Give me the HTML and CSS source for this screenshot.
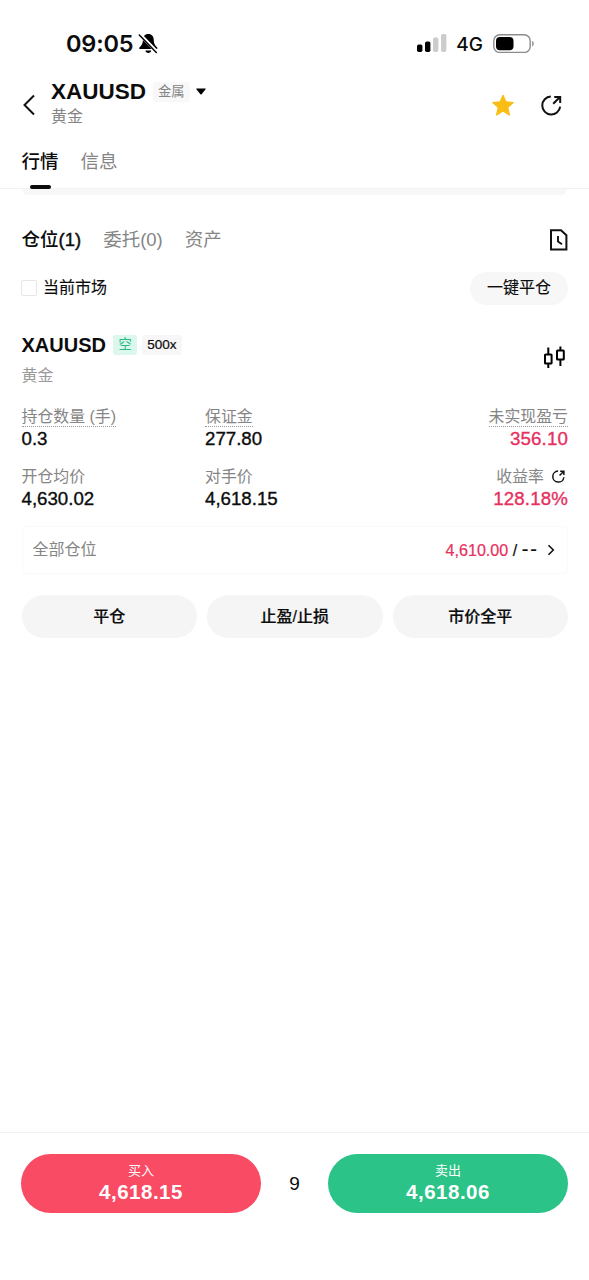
FILE: index.html
```html
<!DOCTYPE html>
<html lang="zh-CN">
<head>
<meta charset="utf-8">
<title>XAUUSD 黄金</title>
<link rel="stylesheet" href="styles.css">
</head>
<body>
<div class="screen">
  <div class="status">
    <span class="clock">09:05</span>
    <svg class="bell" width="21" height="22" viewBox="0 0 21 22">
      <path d="M10.3 1c-3.6 0-5.400 2.600-5.400 5.700 0 3.800-1 5.300-3.300 7.500-.8.800-.4 1.900.7 1.900h16c1.100 0 1.500-1.100.7-1.900-2.300-2.200-3.300-3.700-3.300-7.500C15.700 3.600 13.900 1 10.300 1z" fill="#000"/>
      <path d="M7.300 17.500h6c-.3 1.600-1.400 2.500-3 2.500s-2.700-.9-3-2.500z" fill="#000"/>
      <path d="M2.200 1.800l17 17.500" stroke="#fff" stroke-width="3.400"/>
      <path d="M1.300 2l17 17.500" stroke="#000" stroke-width="1.500" stroke-linecap="round"/>
    </svg>
    <svg class="signal" width="30" height="20" viewBox="0 0 30 20">
      <rect x="0" y="11.500" width="5.400" height="7.500" rx="1.700"/>
      <rect x="8" y="8.500" width="5.400" height="10.500" rx="1.700"/>
      <rect x="16" y="4.500" width="5.400" height="14.500" rx="1.700" fill="#ccc"/>
      <rect x="24" y="1" width="5.400" height="18" rx="1.700" fill="#ccc"/>
    </svg>
    <span class="network">4G</span>
    <svg class="battery" width="42" height="20" viewBox="0 0 42 20">
      <rect x=".8" y=".8" width="36.400" height="17.600" rx="6" fill="none" stroke="#8c8c8c" stroke-width="1.400"/>
      <rect x="3" y="3" width="17.500" height="13.300" rx="4" fill="#000"/>
      <path d="M39.200 6.800c2 .7 2 5 0 5.700z" fill="#8c8c8c"/>
    </svg>
  </div>

  <header class="header">
    <svg class="back" width="13" height="22" viewBox="0 0 13 22"><path d="M12 1.500L2.500 11l9.500 9.500" fill="none" stroke="#111" stroke-width="2"/></svg>
    <div class="instrument">
      <div class="instrument-top">
        <span class="symbol">XAUUSD</span>
        <span class="category">金属</span>
        <svg width="10" height="7" viewBox="0 0 10 7"><path d="M.8.400h8.400c.5 0 .7.500.4.900L5.600 6.200c-.3.400-.9.400-1.200 0L.4 1.300C.1.900.3.400.8.400z"/></svg>
      </div>
      <div class="instrument-name">黄金</div>
    </div>
    <svg class="star" width="24" height="23" viewBox="0 0 24 23"><path d="M12 1l3 6.800 7.600.7-5.700 5.100 1.700 7.700L12 17.200l-6.600 4.100 1.700-7.700L1.400 8.500 9 7.800z" fill="#fabd14" stroke="#fabd14" stroke-width="1" stroke-linejoin="round"/></svg>
    <svg class="share" width="21" height="21" viewBox="0 0 21 21"><g fill="none" stroke="#111" stroke-width="2"><path d="M9.800 1.500a9 9 0 1 0 9.400 10.200M12.200 8.800l6.500-6.500M13.200 2h6v6"/></g></svg>
  </header>

  <nav class="tabs">
    <span class="tab tab-active">行情</span>
    <span class="tab">信息</span>
  </nav>
  <div class="strip"></div>

  <nav class="sections">
    <span class="section section-active">仓位<span class="count">(1)</span></span>
    <span class="section">委托(0)</span>
    <span class="section">资产</span>
    <svg class="history" width="19" height="22" viewBox="0 0 19 22"><path d="M2 1.200h10l5.400 5v14.300H2z" fill="none" stroke="#111" stroke-width="2"/><path d="M9 7v5.500l4 2.700" fill="none" stroke="#111" stroke-width="1.900"/></svg>
  </nav>

  <div class="filter">
    <span class="checkbox"></span>
    <span class="filter-label">当前市场</span>
    <button class="close-all">一键平仓</button>
  </div>

  <section class="position">
    <div class="position-head">
      <div>
        <div class="position-title">
          <span class="position-symbol">XAUUSD</span>
          <span class="side">空</span>
          <span class="leverage">500x</span>
        </div>
        <div class="position-name">黄金</div>
      </div>
      <svg class="candles" width="22" height="23" viewBox="0 0 22 23"><g fill="none" stroke="#000" stroke-width="2"><rect x="2" y="8.500" width="6.600" height="9" rx=".6"/><rect x="14" y="4.500" width="6.800" height="9" rx=".6"/><path d="M5.300 1.500v7M5.300 17.500v4.500M17.400.5v4M17.400 13.500v6.500"/></g></svg>
    </div>

    <div class="stats">
      <div class="stat"><span class="label hint">持仓数量 (手)</span><span class="value">0.3</span></div>
      <div class="stat"><span class="label hint">保证金</span><span class="value">277.80</span></div>
      <div class="stat stat-end"><span class="label hint">未实现盈亏</span><span class="value up">356.10</span></div>
      <div class="stat"><span class="label">开仓均价</span><span class="value">4,630.02</span></div>
      <div class="stat"><span class="label">对手价</span><span class="value">4,618.15</span></div>
      <div class="stat stat-end"><span class="label">收益率<svg class="mini" width="13" height="13" viewBox="0 0 21 21"><g fill="none" stroke="#111" stroke-width="2.400"><path d="M9.800 1.500a9 9 0 1 0 9.400 10.200M12.200 8.800l6.500-6.500M13.200 2h6v6"/></g></svg></span><span class="value up">128.18%</span></div>
    </div>

    <div class="limits">
      <span class="limits-label">全部仓位</span>
      <span class="limits-value"><span class="limits-price">4,610.00</span> / <span class="dashes">--</span></span>
      <svg width="8" height="12" viewBox="0 0 8 12"><path d="M1.500 1.200L6.300 6l-4.800 4.800" fill="none" stroke="#111" stroke-width="1.600"/></svg>
    </div>

    <div class="actions">
      <button class="action">平仓</button>
      <button class="action">止盈/止损</button>
      <button class="action">市价全平</button>
    </div>
  </section>

  <footer class="trade">
    <button class="quote buy"><span class="quote-label">买入</span><span class="quote-price">4,618.15</span></button>
    <span class="spread">9</span>
    <button class="quote sell"><span class="quote-label">卖出</span><span class="quote-price">4,618.06</span></button>
  </footer>
</div>
</body>
</html>
```
FILE: styles.css
```css
* { box-sizing: border-box; }
body {
  margin: 0;
  background: #fff;
  color: #0c0c0c;
  font-family: "Liberation Sans", "Noto Sans CJK SC", sans-serif;
}
svg { display: block; flex: none; }
button { border: 0; padding: 0; margin: 0; font: inherit; color: inherit; }
.screen { width: 589px; height: 1280px; display: flex; flex-direction: column; overflow: hidden; }

.status { height: 76px; display: flex; padding: 0 54px 0 66px; align-items: flex-start; font-family: Inter, sans-serif; }
.clock { font-size: 23.5px; line-height: 30px; font-weight: 600; letter-spacing: -0.2px; margin-top: 29px; }
.bell { margin: 33px 0 0 5px; }
.signal { margin: 33px 0 0 auto; }
.network { font-size: 19px; line-height: 24px; font-weight: 500; margin: 33px 0 0 9px; }
.battery { margin: 34px 0 0 10px; }

.header { height: 62px; display: flex; align-items: flex-start; padding: 0 27px 0 22px; }
.back { margin-top: 18px; }
.instrument { margin-left: 16px; flex: 1; }
.instrument-top { display: flex; align-items: center; height: 31px; }
.symbol { font-size: 22.5px; line-height: 30px; font-weight: 700; }
.category { margin: 0 6px 0 7px; padding: 0 5px; height: 20px; font-size: 13.3px; line-height: 19px; background: #f8f8f8; color: #858585; border-radius: 3px; }
.instrument-name { font-size: 16px; line-height: 20px; color: #858585; }
.star { margin-top: 18px; }
.share { margin: 19px 0 0 26px; }

.tabs { height: 51px; display: flex; gap: 22px; padding: 11px 22px 0 21.5px; border-bottom: 1px solid #f2f2f2; }
.tab { position: relative; font-size: 18.5px; line-height: 26px; color: #858585; }
.tab-active { color: #0c0c0c; font-weight: 500; }
.tab-active::after { content: ""; position: absolute; left: 8px; top: 35.5px; width: 21px; height: 4px; border-radius: 2px; background: #0c0c0c; }
.strip { height: 6px; margin: 0 22px; background: #f7f7f7; border-radius: 0 0 6px 6px; }

.sections { height: 72px; display: flex; gap: 22px; padding: 32px 20px 0 21.5px; }
.section { font-size: 18.5px; line-height: 26px; color: #858585; }
.section-active { color: #0c0c0c; font-weight: 500; }
.count { -webkit-text-stroke: 0.4px; }
.history { margin: 2px 1px 0 auto; }

.filter { height: 42px; display: flex; align-items: center; padding: 0 21px; }
.checkbox { width: 16px; height: 16px; border: 1.5px solid #e6e6e6; border-radius: 2px; }
.filter-label { margin-left: 6px; font-size: 16px; line-height: 24px; }
.close-all { margin-left: auto; width: 98px; height: 33px; border-radius: 17px; background: #f7f7f7; font-size: 16px; line-height: 32px; }
.filter-label, .close-all { -webkit-text-stroke: 0.15px; }

.position { flex: 1; padding: 23px 21px 0 21.5px; }
.position-head { display: flex; justify-content: space-between; height: 75px; }
.position-title { display: flex; align-items: center; height: 26px; }
.position-symbol { font-size: 20px; line-height: 26px; font-weight: 700; }
.side { margin-left: 7px; padding: 0 5.5px; height: 20px; font-size: 13.3px; line-height: 20px; color: #2bb886; background: #dcf8ee; border-radius: 3px; }
.leverage { margin-left: 5px; padding: 0 5px; height: 20px; font-size: 13.5px; line-height: 20px; background: #f7f7f7; border-radius: 3px; -webkit-text-stroke: 0.2px; }
.position-name { margin-top: 6px; font-size: 16px; line-height: 24px; color: #9a9a9a; }
.candles { margin: 14px 3px 0 0; }

.stats { display: grid; grid-template-columns: 183.5px 184px 1fr; row-gap: 12px; }
.stat { display: flex; flex-direction: column; align-items: flex-start; height: 48px; }
.stat-end { align-items: flex-end; }
.label { display: flex; align-items: center; height: 20px; font-size: 15.9px; line-height: 20px; color: #858585; border-bottom: 1px solid transparent; white-space: pre; }
.hint { border-bottom: 1px dotted #999; }
.mini { margin: 0 3px 0 8px; }
.value { font-size: 18.7px; line-height: 24px; -webkit-text-stroke: 0.35px; }
.up { color: #e7305e; letter-spacing: 0.15px; }

.limits { display: flex; align-items: center; height: 48px; margin-top: 11px; padding: 0 12px 0 10px; border: 1px solid #fafafa; border-radius: 4px; }
.limits-label { flex: 1; font-size: 16px; line-height: 24px; color: #858585; }
.limits-value { display: flex; margin-right: 8px; font-size: 16.1px; line-height: 24px; white-space: pre; -webkit-text-stroke: 0.2px; }
.limits-price { color: #e7305e; }
.dashes { font-size: 20px; line-height: 22px; letter-spacing: 2px; }

.actions { display: grid; grid-template-columns: repeat(3, 1fr); gap: 10px; margin-top: 21px; }
.action { height: 43px; border-radius: 22px; background: #f5f5f5; font-size: 16px; line-height: 43px; font-weight: 500; -webkit-text-stroke: 0.2px; }

.trade { height: 148px; display: flex; align-items: flex-start; padding: 21px 21px 0; border-top: 1px solid #f2f2f2; }
.quote { width: 240px; height: 59px; border-radius: 30px; color: #fff; display: flex; flex-direction: column; align-items: center; }
.buy { background: #f94b63; }
.sell { background: #2bc388; }
.quote-label { margin-top: 7px; font-size: 13px; line-height: 20px; }
.quote-price { font-size: 20.5px; line-height: 22px; letter-spacing: 0.5px; font-weight: 700; }
.spread { flex: 1; text-align: center; font-size: 19px; line-height: 60px; }
```
